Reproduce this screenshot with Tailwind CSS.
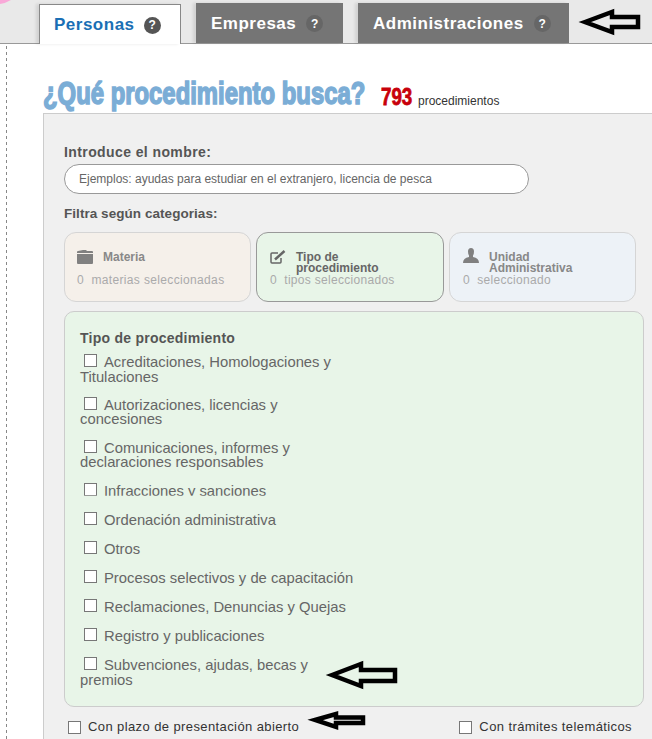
<!DOCTYPE html>
<html lang="es">

<head>
  <meta charset="UTF-8">
  <meta name="viewport" content="width=device-width, initial-scale=1.0">
  <title>Procedimientos</title>
  <script src="https://cdn.jsdelivr.net/npm/@tailwindcss/browser@4"></script>
</head>

<body class="bg-white font-['Liberation_Sans',Arial,sans-serif]">
  <div class="relative w-[652px] h-[739px] overflow-hidden">

    <!-- Tabs -->
    <header class="h-[44px] bg-[#e9e9e9] border-b border-[#999] flex items-end pl-[39px]">
      <a class="relative top-px flex items-center h-[40px] w-[142px] pl-[14px] pt-[1px] gap-[9px] bg-white border border-b-0 border-[#888] text-[#1a6fb5] text-[17px] font-bold tracking-[0.5px] shadow-[-3px_0_3px_rgba(0,0,0,0.1)]">Personas
        <span class="flex items-center justify-center w-[17px] h-[17px] rounded-full bg-[#555] text-white text-[12px] tracking-normal">?</span>
      </a>
      <a class="flex items-center h-[40px] w-[147px] ml-[15px] pl-[15px] pt-[1px] gap-[10px] bg-[#757575] text-white text-[17px] font-bold tracking-[0.5px] shadow-[-3px_0_3px_rgba(0,0,0,0.1)]">Empresas
        <span class="flex items-center justify-center w-[17px] h-[17px] rounded-full bg-[#666] text-white text-[12px] tracking-normal">?</span>
      </a>
      <a class="flex items-center h-[40px] w-[211px] ml-[15px] pl-[15px] pt-[1px] gap-[10px] bg-[#757575] text-white text-[17px] font-bold tracking-[0.5px] shadow-[-3px_0_3px_rgba(0,0,0,0.1)]">Administraciones
        <span class="flex items-center justify-center w-[17px] h-[17px] rounded-full bg-[#666] text-white text-[12px] tracking-normal">?</span>
      </a>
    </header>

    <!-- hand drawn arrows, corner scribble and dotted margin -->
    <svg class="absolute left-0 top-0 w-[652px] h-[739px] pointer-events-none z-10" viewBox="0 0 652 739" fill="none" stroke="#000">
      <path stroke="none" fill="#f9a8d8" d="M0 0 L11 0 Q6 3 0 4 Z" />
      <path stroke="#888" stroke-dasharray="3 3" d="M6.5 46 L6.5 739" />
      <path stroke-width="4.5" d="M585 22 L612 12 L612 17 L638 17 L638 27 L612 27 L612 32 Z" />
      <path stroke-width="4.5" d="M332 675 L361 664 L361 670 L395 670 L395 681 L361 681 L361 686 Z" />
      <path stroke-width="4.5" d="M315 720 L336 714 L336 717.5 L363 717.5 L363 723 L336 723 L336 727 Z" />
    </svg>

    <main class="pl-[43px]">
      <!-- Title -->
      <div class="flex items-baseline h-[69px] pt-[32px]">
        <h1 class="relative -top-[1px] w-[324px] whitespace-nowrap origin-left scale-x-[0.77] text-[#7badd6] text-[31px] font-bold leading-[38px] [-webkit-text-stroke:1.6px_#7badd6]">¿Qué procedimiento busca?</h1>
        <span class="w-[32px] ml-[14px] whitespace-nowrap origin-left scale-x-[0.78] text-[#c8000a] text-[24px] font-bold [-webkit-text-stroke:0.8px_#c8000a]">793</span>
        <span class="ml-[5px] text-[#333] text-[12px]">procedimientos</span>
      </div>

      <!-- Search panel -->
      <section class="w-[640px] h-[640px] bg-[#f0f0f0] border border-[#ccc] pl-[20px] pt-[30px]">
        <label class="block text-[#555] text-[14px] font-bold leading-[16px] tracking-[0.4px]">Introduce el nombre:</label>
        <div class="flex items-center mt-[4px] w-[465px] h-[30px] rounded-[15px] bg-white border border-[#999] pl-[14px] text-[#666] text-[12px]">Ejemplos: ayudas para estudiar en el extranjero, licencia de pesca</div>
        <p class="mt-[12px] text-[#555] text-[13.5px] font-bold leading-[16px] tracking-[0.05px]">Filtra según categorias:</p>

        <!-- Category cards -->
        <div class="flex gap-[5px] mt-[10px]">
          <div class="w-[187px] h-[70px] rounded-[12px] bg-[#f5f0ea] border border-[#d5d5d5] px-[12px] pt-[16px]">
            <div class="flex items-center gap-[10px] h-[16px] text-[#888] text-[12px] font-bold">
              <svg class="w-[16px] h-[14px]" viewBox="0 0 16 14" fill="#808080"><path d="M0 2 Q0 1 1 1 L6 0 L9 0 L10 1 L15 1 Q16 1 16 2 L16 3 L0 3 Z M0 4 L16 4 L16 13 Q16 14 15 14 L1 14 Q0 14 0 13 Z" /></svg>
              Materia
            </div>
            <p class="mt-[8px] text-[#aaa] text-[12px] leading-[14px] tracking-[0.35px]">0&nbsp; materias seleccionadas</p>
          </div>
          <div class="w-[188px] h-[70px] rounded-[12px] bg-[#e8f5e8] border border-[#999] px-[13px] pt-[17px]">
            <div class="flex items-start gap-[10px] h-[24px] text-[#666] text-[12px] font-bold leading-[11px]">
              <svg class="w-[16px] h-[14px] shrink-0" viewBox="0 0 16 14" fill="none" stroke="#666" stroke-width="1.5"><path d="M11 8 L11 12 Q11 13 10 13 L2 13 Q1 13 1 12 L1 4 Q1 3 2 3 L8 3" /><path stroke-width="2.5" d="M5 9.5 L14.5 1" /></svg>
              <span class="mt-[2px]">Tipo de<br>procedimiento</span>
            </div>
            <p class="-mt-[1px] text-[#aaa] text-[12px] leading-[14px] tracking-[0.3px]">0&nbsp; tipos seleccionados</p>
          </div>
          <div class="w-[187px] h-[70px] rounded-[12px] bg-[#edf2f7] border border-[#d5d5d5] px-[13px] pt-[17px]">
            <div class="flex items-start gap-[10px] h-[24px] text-[#888] text-[12px] font-bold leading-[11px]">
              <svg class="w-[16px] h-[15px] -mt-[2px] shrink-0" viewBox="0 0 16 15" fill="#808080"><path d="M5 3.5 Q5 0 8 0 Q11 0 11 3.5 Q11 6 10 7.5 L10 9 Q16 10 16 15 L0 15 Q0 10 6 9 L6 7.5 Q5 6 5 3.5 Z" /></svg>
              <span class="mt-[2px]">Unidad<br>Administrativa</span>
            </div>
            <p class="-mt-[1px] text-[#aaa] text-[12px] leading-[14px] tracking-[0.3px]">0&nbsp; seleccionado</p>
          </div>
        </div>

        <!-- Open category -->
        <div class="mt-[9px] w-[580px] h-[396px] rounded-[10px] bg-[#e8f5e8] border border-[#ccc] pl-[15px] pt-[18px]">
          <h2 class="text-[#555] text-[14px] font-bold leading-[16px] tracking-[0.25px]">Tipo de procedimiento</h2>
          <ul class="mt-[9px] w-[278px] flex flex-col gap-[14.5px] text-[#666] text-[14.8px] leading-[14.5px]">
            <li class="-mb-[0.7px]"><input type="checkbox" class="appearance-none -mt-[3px] w-[13px] h-[13px] ml-[4px] mr-[7px] bg-white border border-[#777]">Acreditaciones, Homologaciones y Titulaciones</li>
            <li class="-mb-[0.7px]"><input type="checkbox" class="appearance-none -mt-[3px] w-[13px] h-[13px] ml-[4px] mr-[7px] bg-white border border-[#777]">Autorizaciones, licencias y concesiones</li>
            <li><input type="checkbox" class="appearance-none -mt-[3px] w-[13px] h-[13px] ml-[4px] mr-[7px] bg-white border border-[#777]">Comunicaciones, informes y declaraciones responsables</li>
            <li class="[clip-path:inset(-2px_0_3px_0)]"><input type="checkbox" class="appearance-none -mt-[3px] w-[13px] h-[13px] ml-[4px] mr-[7px] bg-white border border-[#777]">Infracciones y sanciones</li>
            <li><input type="checkbox" class="appearance-none -mt-[3px] w-[13px] h-[13px] ml-[4px] mr-[7px] bg-white border border-[#777]">Ordenación administrativa</li>
            <li><input type="checkbox" class="appearance-none -mt-[3px] w-[13px] h-[13px] ml-[4px] mr-[7px] bg-white border border-[#777]">Otros</li>
            <li><input type="checkbox" class="appearance-none -mt-[3px] w-[13px] h-[13px] ml-[4px] mr-[7px] bg-white border border-[#777]">Procesos selectivos y de capacitación</li>
            <li><input type="checkbox" class="appearance-none -mt-[3px] w-[13px] h-[13px] ml-[4px] mr-[7px] bg-white border border-[#777]">Reclamaciones, Denuncias y Quejas</li>
            <li><input type="checkbox" class="appearance-none -mt-[3px] w-[13px] h-[13px] ml-[4px] mr-[7px] bg-white border border-[#777]">Registro y publicaciones</li>
            <li><input type="checkbox" class="appearance-none -mt-[3px] w-[13px] h-[13px] ml-[4px] mr-[7px] bg-white border border-[#777]">Subvenciones, ajudas, becas y premios</li>
          </ul>
        </div>

        <!-- Extra filters -->
        <div class="flex justify-between w-[568px] mt-[12px] text-[#333] text-[13px] leading-[16px] tracking-[0.4px]">
          <label class="flex items-center gap-[7px] ml-[4px]"><input type="checkbox" class="appearance-none w-[13px] h-[13px] bg-white border border-[#777]">Con plazo de presentación abierto</label>
          <label class="flex items-center gap-[7px]"><input type="checkbox" class="appearance-none w-[13px] h-[13px] bg-white border border-[#777]">Con trámites telemáticos</label>
        </div>
      </section>
    </main>
  </div>
</body>

</html>
